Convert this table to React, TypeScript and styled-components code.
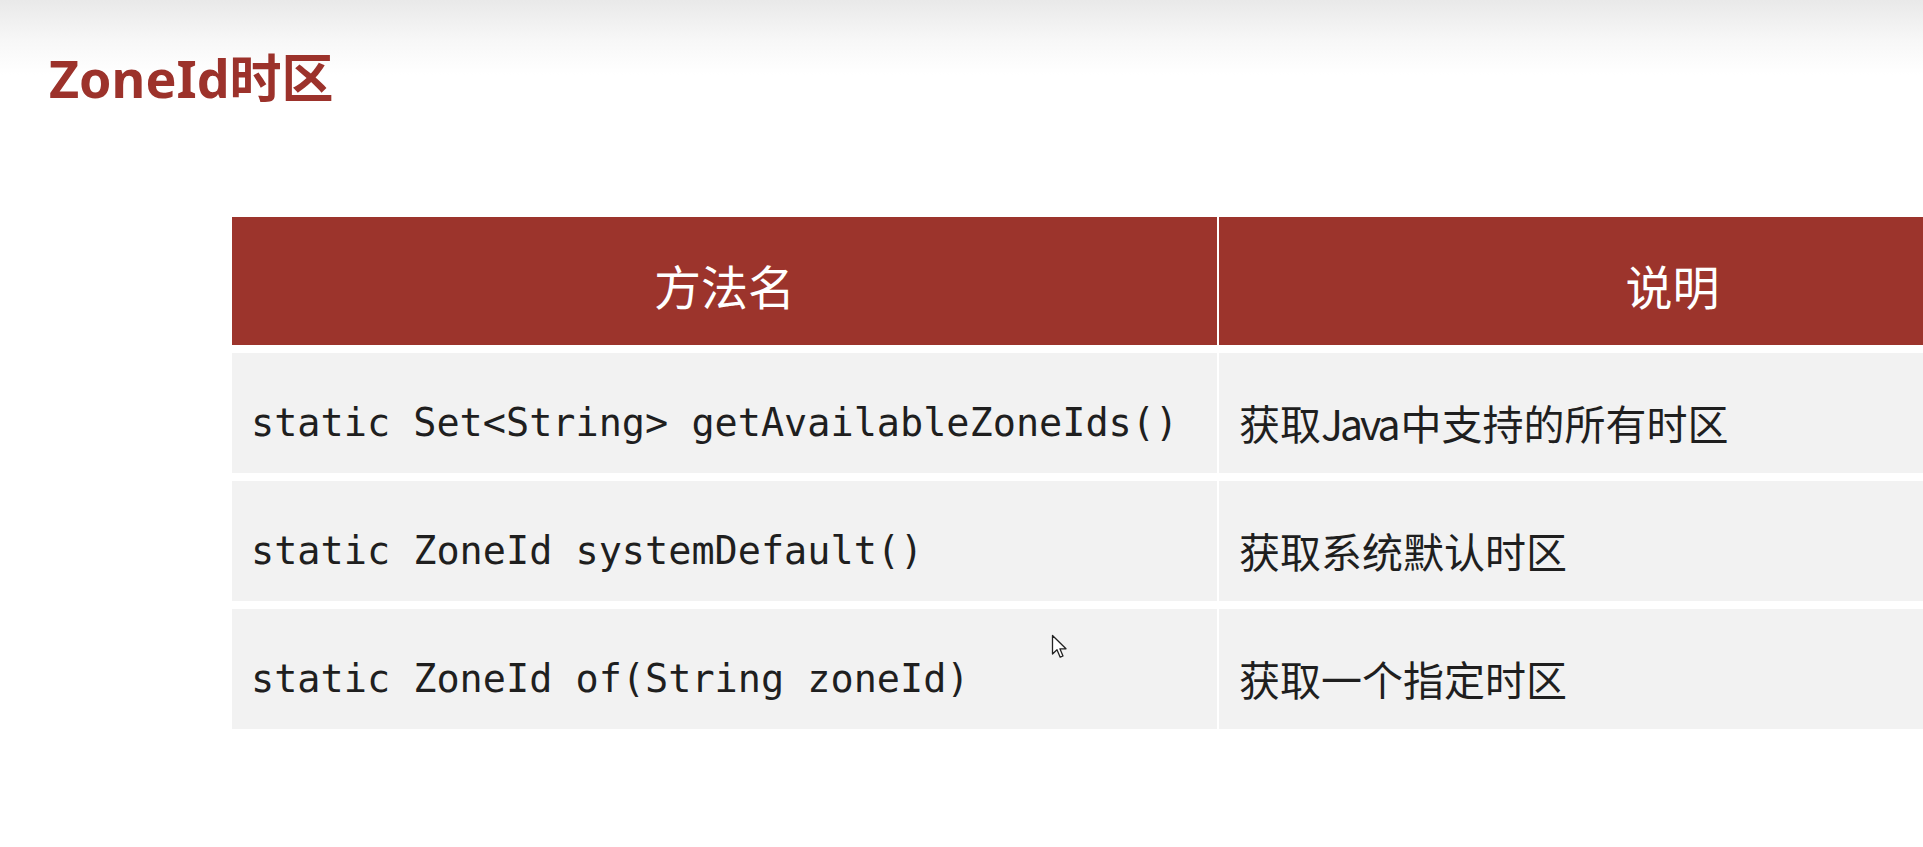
import React from 'react'
import styled, { createGlobalStyle } from 'styled-components'

const rows = [
  { method: 'static Set<String> getAvailableZoneIds()', desc: ['获取', 'Java', '中支持的所有时区'] },
  { method: 'static ZoneId systemDefault()', desc: ['获取系统默认时区'] },
  { method: 'static ZoneId of(String zoneId)', desc: ['获取一个指定时区'] },
]

const GlobalStyle = createGlobalStyle`
  html, body {
    margin: 0;
    padding: 0;
    background: #ffffff;
    overflow: hidden;
  }
`

const Slide = styled.div`
  position: relative;
  width: 1923px;
  height: 847px;
  background: linear-gradient(to bottom, #e9e9e9 0px, #f7f7f7 40px, #ffffff 75px);
  overflow: hidden;
`

const Title = styled.h1`
  margin: 0;
  padding: 46px 0 0 49px;
  font-family: 'Noto Sans', 'Noto Sans CJK SC', sans-serif;
  font-size: 52px;
  font-weight: 700;
  line-height: 64px;
  color: #9c322b;
`

const Table = styled.div`
  display: grid;
  grid-template-columns: 985px 907px;
  column-gap: 2px;
  row-gap: 8px;
  margin: 107px 0 0 232px;
  width: 1894px;
`

const HeadCell = styled.div`
  height: 128px;
  display: flex;
  align-items: center;
  justify-content: center;
  padding-top: 6px;
  box-sizing: border-box;
  background: #9c342c;
  color: #ffffff;
  font-family: 'Noto Sans CJK SC', sans-serif;
  font-size: 47px;
  font-weight: 400;
`

const Cell = styled.div<{ $mono?: boolean }>`
  height: 120px;
  display: flex;
  align-items: center;
  box-sizing: border-box;
  padding: 18px 0 0 ${(p) => (p.$mono ? '19px' : '20px')};
  background: #f2f2f2;
  color: #1f1f1f;
  white-space: pre;
  font-family: ${(p) =>
    p.$mono ? "'DejaVu Sans Mono', 'Liberation Mono', monospace" : "'Noto Sans CJK SC', sans-serif"};
  font-size: ${(p) => (p.$mono ? '38.5px' : '41px')};
`

const Latin = styled.span`
  letter-spacing: -3px;
  margin-right: 3px;
`

const Cursor = styled.svg`
  position: absolute;
  left: 1051px;
  top: 634px;
  width: 18px;
  height: 26px;
`

const App = () => {
  return (
    <Slide>
      <GlobalStyle />
      <Title>ZoneId时区</Title>
      <Table>
        <HeadCell>方法名</HeadCell>
        <HeadCell>说明</HeadCell>
        {rows.map((r) => (
          <React.Fragment key={r.method}>
            <Cell $mono>{r.method}</Cell>
            <Cell>
              {r.desc.map((part) =>
                part === 'Java' ? <Latin key={part}>{part}</Latin> : <span key={part}>{part}</span>
              )}
            </Cell>
          </React.Fragment>
        ))}
      </Table>
      <Cursor viewBox="0 0 18 26">
        <path
          d="M1.5 1.5 L1.5 20 L6 15.8 L9.2 23.2 L12 22 L8.9 14.8 L15 14.8 Z"
          fill="#ffffff"
          stroke="#222222"
          strokeWidth="1.3"
          strokeLinejoin="round"
        />
      </Cursor>
    </Slide>
  )
}

export default App
